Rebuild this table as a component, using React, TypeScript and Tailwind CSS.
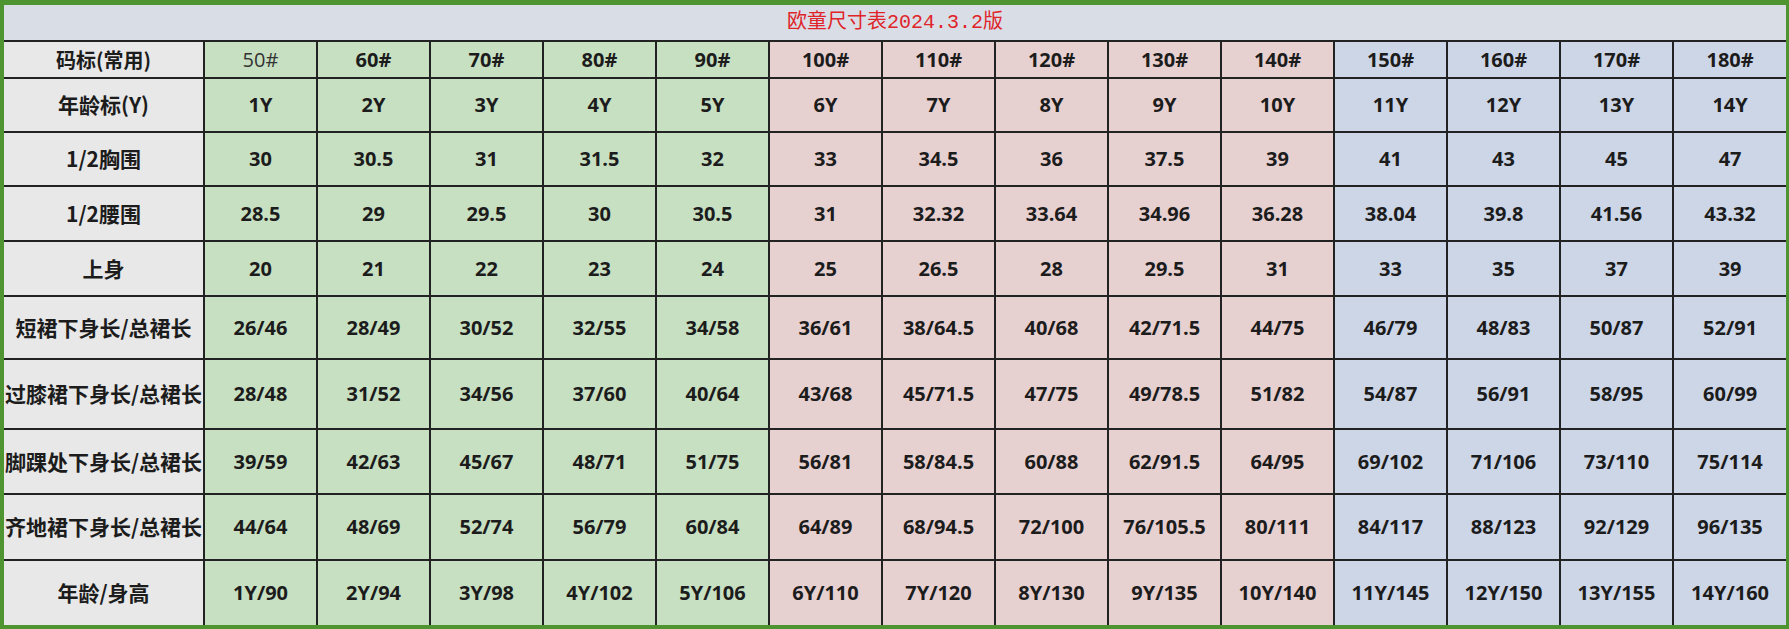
import React from "react";

const cols = ["50#", "60#", "70#", "80#", "90#", "100#", "110#", "120#", "130#", "140#", "150#", "160#", "170#", "180#"];

const rows: { label: string; h: string; vals: string[] }[] = [
  { label: "年龄标(Y)", h: "h-[54px]", vals: ["1Y", "2Y", "3Y", "4Y", "5Y", "6Y", "7Y", "8Y", "9Y", "10Y", "11Y", "12Y", "13Y", "14Y"] },
  { label: "1/2胸围", h: "h-[54px]", vals: ["30", "30.5", "31", "31.5", "32", "33", "34.5", "36", "37.5", "39", "41", "43", "45", "47"] },
  { label: "1/2腰围", h: "h-[55px]", vals: ["28.5", "29", "29.5", "30", "30.5", "31", "32.32", "33.64", "34.96", "36.28", "38.04", "39.8", "41.56", "43.32"] },
  { label: "上身", h: "h-[55px]", vals: ["20", "21", "22", "23", "24", "25", "26.5", "28", "29.5", "31", "33", "35", "37", "39"] },
  { label: "短裙下身长/总裙长", h: "h-[63px]", vals: ["26/46", "28/49", "30/52", "32/55", "34/58", "36/61", "38/64.5", "40/68", "42/71.5", "44/75", "46/79", "48/83", "50/87", "52/91"] },
  { label: "过膝裙下身长/总裙长", h: "h-[70px]", vals: ["28/48", "31/52", "34/56", "37/60", "40/64", "43/68", "45/71.5", "47/75", "49/78.5", "51/82", "54/87", "56/91", "58/95", "60/99"] },
  { label: "脚踝处下身长/总裙长", h: "h-[65px]", vals: ["39/59", "42/63", "45/67", "48/71", "51/75", "56/81", "58/84.5", "60/88", "62/91.5", "64/95", "69/102", "71/106", "73/110", "75/114"] },
  { label: "齐地裙下身长/总裙长", h: "h-[66px]", vals: ["44/64", "48/69", "52/74", "56/79", "60/84", "64/89", "68/94.5", "72/100", "76/105.5", "80/111", "84/117", "88/123", "92/129", "96/135"] },
  { label: "年龄/身高", h: "h-[65px]", vals: ["1Y/90", "2Y/94", "3Y/98", "4Y/102", "5Y/106", "6Y/110", "7Y/120", "8Y/130", "9Y/135", "10Y/140", "11Y/145", "12Y/150", "13Y/155", "14Y/160"] },
];

function bg(i: number) {
  if (i < 5) return "bg-[#c8e0c2]";
  if (i < 10) return "bg-[#e7d0d0]";
  return "bg-[#cdd6e7]";
}

const numFont = { fontFamily: '"Open Sans", "Noto Sans CJK SC", sans-serif' };

export default function App() {
  return (
    <div className="w-[1789px] h-[629px] bg-[#4e9430] pt-[5px] pl-[4px] pr-[3px] pb-[4px] overflow-hidden">
      <table
        className="w-[1782px] border-collapse table-fixed text-[#1c1c1c]"
        style={{ fontFamily: '"Noto Sans CJK SC", sans-serif' }}
      >
        <colgroup>
          <col className="w-[200px]" />
          {cols.map((c) => (
            <col key={c} className="w-[113px]" />
          ))}
        </colgroup>
        <tbody>
          <tr className="h-[36px]">
            <td colSpan={15} className="bg-[#d9dee6] text-center border-b-2 border-[#222]">
              <span className="text-[#e0242a] text-[20px]" style={{ fontFamily: '"Liberation Mono", "Noto Sans CJK SC", monospace' }}>
                欧童尺寸表2024.3.2版
              </span>
            </td>
          </tr>
          <tr className="h-[37px]">
            <td className="bg-[#e8e8e8] text-center font-bold text-[20px] border-2 border-l-0 border-[#222]">码标(常用)</td>
            {cols.map((c, i) => (
              <td
                key={c}
                className={`${bg(i)} text-center text-[20px] border-2 border-[#222] ${i === 0 ? "font-normal text-[#333]" : "font-bold"} ${i === 13 ? "border-r-0" : ""}`}
                style={numFont}
              >
                {c}
              </td>
            ))}
          </tr>
          {rows.map((r, ri) => (
            <tr key={r.label} className={r.h}>
              <td
                className={`bg-[#e8e8e8] text-center font-bold text-[21px] whitespace-nowrap border-2 border-l-0 border-[#222] ${ri === rows.length - 1 ? "border-b-0" : ""}`}
              >
                {r.label}
              </td>
              {r.vals.map((v, i) => (
                <td
                  key={i}
                  className={`${bg(i)} text-center font-bold text-[20px] border-2 border-[#222] ${i === 13 ? "border-r-0" : ""} ${ri === rows.length - 1 ? "border-b-0" : ""}`}
                  style={numFont}
                >
                  {v}
                </td>
              ))}
            </tr>
          ))}
        </tbody>
      </table>
    </div>
  );
}
